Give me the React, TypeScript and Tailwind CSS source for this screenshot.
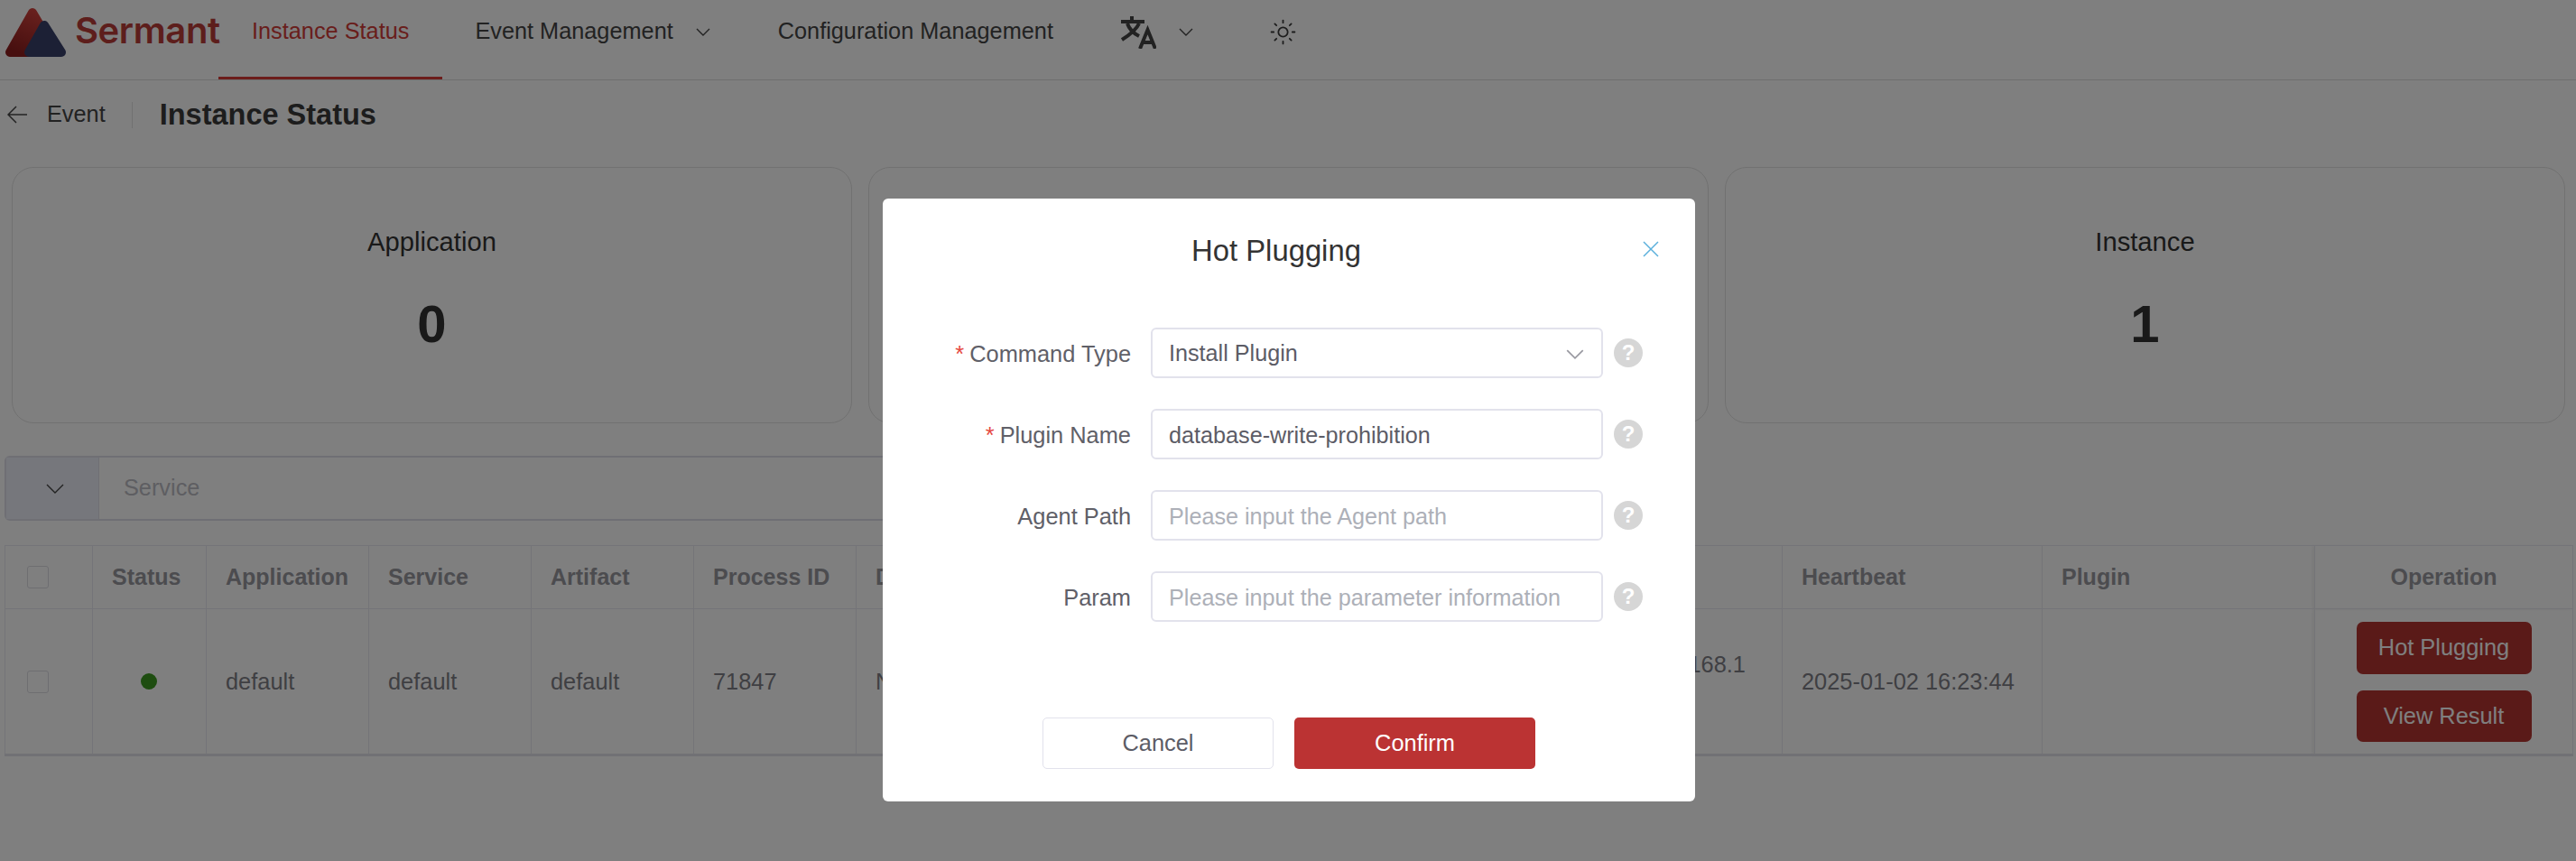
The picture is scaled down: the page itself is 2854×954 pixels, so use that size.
import { Sun } from 'lucide-react';

function Chevron({ className = '' }: { className?: string }) {
    return (
        <svg width="16" height="9" viewBox="0 0 16 9" fill="none" className={className}>
            <path d="M1 1l7 7 7-7" stroke="currentColor" strokeWidth="1.4" />
        </svg>
    );
}

function Logo() {
    return (
        <div className="flex items-start">
            <svg width="74" height="64" viewBox="0 0 74 64" className="mt-[6px] ml-[4px] shrink-0">
                <defs>
                    <linearGradient id="red" x1="0.7" y1="0" x2="0.2" y2="1">
                        <stop offset="0" stopColor="#d2423c" />
                        <stop offset="1" stopColor="#8f1f1f" />
                    </linearGradient>
                </defs>
                <path d="M32 8L7 52H58Z" fill="url(#red)" stroke="url(#red)" strokeWidth="10" strokeLinejoin="round" />
                <path d="M45 22L28 52H64Z" fill="#39416b" stroke="#39416b" strokeWidth="10" strokeLinejoin="round" />
            </svg>
            <span className="ml-[5px] mt-[9px] font-['Inter',sans-serif] text-[40px] leading-[50px] font-semibold tracking-[-0.4px] text-[#bb3d38]">
                Sermant
            </span>
        </div>
    );
}

function TranslateIcon() {
    return (
        <svg width="39" height="36" viewBox="0 0 39 36" fill="none" stroke="#444" strokeWidth="4">
            <path d="M12 0v5M0 6h26M7 8c2 6 7 11 13 14M20 8C17 15 9 21 1 26" />
            <path d="M21 36l8.5-21L38 36M24 29h11" />
        </svg>
    );
}

function Nav() {
    return (
        <nav className="flex h-[89px] border-b border-[#dfdfdf] text-[25.3px] text-[#444]">
            <div className="w-[242px]">
                <Logo />
            </div>
            <div className="flex items-center border-b-[3px] border-[#d83a36] px-[37px] pb-[15px] text-[#d23c38]">
                Instance Status
            </div>
            <div className="flex items-center pb-[18px]">
                <span className="ml-[36px]">Event Management</span>
                <Chevron className="ml-[25px]" />
                <span className="ml-[75px]">Configuration Management</span>
                <div className="ml-[75px] mt-[2px]">
                    <TranslateIcon />
                </div>
                <Chevron className="ml-[25px]" />
                <Sun size={31} strokeWidth={1.4} className="ml-[84px] text-[#3a3a3a]" />
            </div>
        </nav>
    );
}

function Breadcrumb() {
    return (
        <div className="flex h-[96px] items-center pl-[8px] pb-[20px]">
            <svg width="22" height="20" viewBox="0 0 22 20" fill="none" stroke="#444" strokeWidth="1.5">
                <path d="M10 1L1 10l9 9M1 10h21" />
            </svg>
            <span className="ml-[22px] text-[25.3px] text-[#444]">Event</span>
            <div className="ml-[29px] h-[29px] w-px bg-[#e0e0e0]" />
            <h1 className="ml-[30px] text-[32.5px] font-bold text-[#3a3a3a]">Instance Status</h1>
        </div>
    );
}

function StatCard({ label, value }: { label: string; value: string }) {
    return (
        <div className="flex h-[284px] flex-1 flex-col items-center rounded-[24px] border border-[#e2e2e2] pt-[64px] text-[#333]">
            <div className="text-[29.2px] leading-[36px]">{label}</div>
            <div className="mt-[40px] text-[58px] leading-[66px] font-bold">{value}</div>
        </div>
    );
}

function SearchBar() {
    return (
        <div className="mt-[36px] ml-[5px] flex h-[72px] w-[1500px] rounded-[6px] border-2 border-[#dedee8]">
            <div className="flex w-[103px] items-center justify-center border-r border-[#dedee8] bg-[#eceef8] pl-[5px] text-[#444]">
                <svg width="20" height="11" viewBox="0 0 20 11" fill="none">
                    <path d="M1 1l9 9 9-9" stroke="currentColor" strokeWidth="1.4" />
                </svg>
            </div>
            <div className="flex items-center pl-[27px] text-[25.3px] text-[#bcbcc4]">Service</div>
        </div>
    );
}

function Checkbox() {
    return <div className="h-[25px] w-[24px] rounded-[3px] border border-[#dcdce2]" />;
}

const columns = [
    { name: 'Status', width: 126 },
    { name: 'Application', width: 180 },
    { name: 'Service', width: 180 },
    { name: 'Artifact', width: 180 },
    { name: 'Process ID', width: 180 },
    { name: 'Deployment', width: 352 },
    { name: 'Version', width: 499 },
    { name: 'IP', width: 175 },
    { name: 'Heartbeat', width: 288 },
    { name: 'Plugin', width: 302 },
];

function InstanceTable() {
    const th = 'border-r border-[#e8e8f0] pl-[21px] text-left text-[25px] font-bold text-[#98989f]';
    const td = 'border-r border-[#e8e8f0] pl-[21px] text-[25.4px] text-[#7e7e86]';

    return (
        <table className="mt-[27px] ml-[5px] w-[2846px] table-fixed border-y border-l border-[#e8e8f0] border-b-[3px] border-b-[#e2e2ea] border-r">
            <colgroup>
                <col className="w-[97px]" />
                {columns.map((c) => (
                    <col key={c.name} style={{ width: c.width }} />
                ))}
                <col />
            </colgroup>
            <thead>
                <tr className="h-[70px] border-b border-[#e8e8f0]">
                    <th className="border-r border-[#e8e8f0] pl-[24px]">
                        <Checkbox />
                    </th>
                    {columns.map((c) => (
                        <th key={c.name} className={th}>
                            {c.name}
                        </th>
                    ))}
                    <th className="border-l border-[#dcdce4] text-center text-[25px] font-bold text-[#98989f] shadow-[-3px_0_4px_rgba(0,0,0,0.06)]">
                        Operation
                    </th>
                </tr>
            </thead>
            <tbody>
                <tr className="h-[162px]">
                    <td className="border-r border-[#e8e8f0] pl-[24px]">
                        <Checkbox />
                    </td>
                    <td className="border-r border-[#e8e8f0]">
                        <div className="ml-[53px] h-[18px] w-[18px] rounded-full bg-[#3c9a20]" />
                    </td>
                    <td className={td}>default</td>
                    <td className={td}>default</td>
                    <td className={td}>default</td>
                    <td className={td}>71847</td>
                    <td className={td}>No</td>
                    <td className={td}>1.0.0</td>
                    <td className={td + ' pb-[3px] leading-[36px]'}>
                        192.168.1
                        <br />
                        .1
                    </td>
                    <td className={td}>2025-01-02 16:23:44</td>
                    <td className={td} />
                    <td className="border-l border-[#dcdce4] shadow-[-3px_0_4px_rgba(0,0,0,0.06)]">
                        <div className="flex flex-col items-center gap-[18px]">
                            <button className="h-[58px] w-[194px] rounded-[7px] bg-[#b53430] text-[25.4px] text-white">
                                Hot Plugging
                            </button>
                            <button className="h-[57px] w-[194px] rounded-[7px] bg-[#b53430] text-[25.4px] text-white">
                                View Result
                            </button>
                        </div>
                    </td>
                </tr>
            </tbody>
        </table>
    );
}

function HelpDot() {
    return (
        <div className="ml-[12px] flex h-[32px] w-[32px] items-center justify-center rounded-full bg-[#d6d6d6] text-[24px] font-bold text-white">
            ?
        </div>
    );
}

function FormRow({ label, required, children }: { label: string; required?: boolean; children: React.ReactNode }) {
    return (
        <div className="flex h-[56px] items-center">
            <label className="w-[297px] pt-[2px] pr-[22px] text-right text-[25.4px] text-[#606068]">
                {required && <span className="mr-[6px] text-[#e5483f]">*</span>}
                {label}
            </label>
            {children}
            <HelpDot />
        </div>
    );
}

const fieldClass =
    'h-[56px] w-[501px] rounded-[6px] border-2 border-[#e2e2ec] bg-white px-[18px] pt-[2px] text-[25.2px] text-[#5c5c66] outline-none placeholder:text-[#adb0b8]';

function HotPluggingModal() {
    return (
        <div className="absolute inset-0 flex justify-center bg-black/50 pt-[220px]">
            <div className="relative ml-[2px] h-[668px] w-[900px] rounded-[6px] bg-white">
                <h2 className="pt-[38px] pr-[28px] text-center text-[32.8px] leading-[40px] text-[#333]">Hot Plugging</h2>
                <button className="absolute top-[47px] right-[40px] text-[#5bb0dc]">
                    <svg width="18" height="18" viewBox="0 0 18 18" fill="none" stroke="currentColor" strokeWidth="1.5">
                        <path d="M1 1l16 16M17 1L1 17" />
                    </svg>
                </button>
                <div className="mt-[65px] flex flex-col gap-[34px]">
                    <FormRow label="Command Type" required>
                        <div className={fieldClass + ' flex items-center justify-between'}>
                            <span>Install Plugin</span>
                            <Chevron className="mr-[3px] scale-125 text-[#9a9aa2]" />
                        </div>
                    </FormRow>
                    <FormRow label="Plugin Name" required>
                        <input readOnly value="database-write-prohibition" className={fieldClass} />
                    </FormRow>
                    <FormRow label="Agent Path">
                        <input readOnly placeholder="Please input the Agent path" className={fieldClass} />
                    </FormRow>
                    <FormRow label="Param">
                        <input readOnly placeholder="Please input the parameter information" className={fieldClass} />
                    </FormRow>
                </div>
                <div className="mt-[106px] flex justify-center gap-[23px]">
                    <button className="h-[57px] w-[256px] rounded-[5px] border border-[#e2e2ec] text-[25.4px] text-[#5c5c66]">
                        Cancel
                    </button>
                    <button className="h-[57px] w-[267px] rounded-[5px] bg-[#bb3333] text-[25.4px] text-white">
                        Confirm
                    </button>
                </div>
            </div>
        </div>
    );
}

export default function App() {
    return (
        <div className="relative h-[954px] w-[2854px] overflow-hidden bg-white font-['Liberation_Sans',Arial,sans-serif]">
            <Nav />
            <Breadcrumb />
            <div className="flex gap-[18px] pr-[12px] pl-[13px]">
                <StatCard label="Application" value="0" />
                <StatCard label="Service" value="1" />
                <StatCard label="Instance" value="1" />
            </div>
            <SearchBar />
            <InstanceTable />
            <HotPluggingModal />
        </div>
    );
}
